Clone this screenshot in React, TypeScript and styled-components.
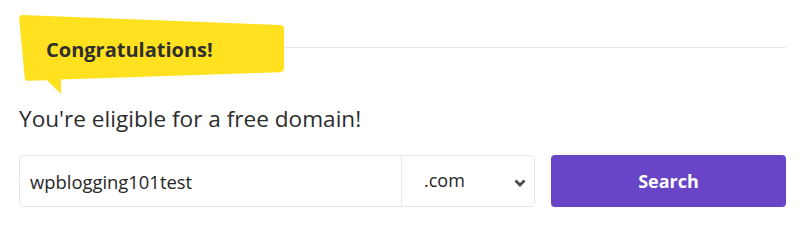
import React from 'react';
import styled, { createGlobalStyle } from 'styled-components';

const GlobalStyle = createGlobalStyle`
  body {
    margin: 0;
    background: #ffffff;
    font-family: "Open Sans", "Noto Sans", sans-serif;
  }
`;

const App = () => {
  return (
    <Page>
      <GlobalStyle />
      <HeaderRow>
        <Badge>
          <BadgeShape viewBox="0 0 265 80" preserveAspectRatio="none">
            <path
              d="M3 0 L261 10 Q265 10.2 265 14 L265 53 Q265 57 261 57.2 L42 64.6 L42 79 L28 65.2 L9 65.8 Q6 65.9 5.7 62.5 L0.2 4 Q0 0 3 0 Z"
              fill="#ffe11f"
            />
          </BadgeShape>
          <BadgeText>Congratulations!</BadgeText>
        </Badge>
        <Divider />
      </HeaderRow>
      <Heading>You're eligible for a free domain!</Heading>
      <SearchRow>
        <Field>
          <DomainInput defaultValue="wpblogging101test" />
          <TldSelect>
            <TldText>.com</TldText>
            <Chevron viewBox="0 0 12 8">
              <path d="M1.5 1.5 L6 6 L10.5 1.5" fill="none" stroke="#4a4a4a" strokeWidth="2.8" />
            </Chevron>
          </TldSelect>
        </Field>
        <SearchButton>Search</SearchButton>
      </SearchRow>
    </Page>
  );
};

export default App;

const Page = styled.div`
  width: 800px;
  height: 225px;
  box-sizing: border-box;
  padding: 15px 14px 0 19px;
  overflow: hidden;
`;

const HeaderRow = styled.div`
  display: flex;
  align-items: flex-start;
`;

const Badge = styled.div`
  position: relative;
  width: 265px;
  height: 80px;
  flex-shrink: 0;
`;

const BadgeShape = styled.svg`
  position: absolute;
  inset: 0;
  width: 100%;
  height: 100%;
`;

const BadgeText = styled.div`
  position: relative;
  padding: 21px 0 0 27px;
  font-size: 20px;
  line-height: 28px;
  font-weight: 700;
  color: #2f2f2f;
`;

const Divider = styled.div`
  flex: 1;
  height: 1px;
  margin-top: 32px;
  background: #e9e9e9;
`;

const Heading = styled.h1`
  margin: 9px 0 0 0;
  font-size: 22.6px;
  line-height: 30px;
  font-weight: 500;
  color: #2d2d2d;
`;

const SearchRow = styled.div`
  display: flex;
  gap: 16px;
  margin-top: 21px;
`;

const Field = styled.div`
  display: flex;
  width: 516px;
  height: 52px;
  box-sizing: border-box;
  border: 1px solid #e6e6e6;
  border-radius: 5px;
  overflow: hidden;
`;

const DomainInput = styled.input`
  flex: 1;
  min-width: 0;
  border: none;
  outline: none;
  padding: 0 0 0 10px;
  font-family: "Open Sans", "Noto Sans", sans-serif;
  font-size: 18.4px;
  color: #262626;
  background: transparent;
`;

const TldSelect = styled.div`
  width: 133px;
  display: flex;
  align-items: center;
  justify-content: space-between;
  box-sizing: border-box;
  padding: 0 8px 0 22px;
  border-left: 1px solid #e8e8e8;
`;

const TldText = styled.span`
  font-size: 18px;
  color: #262626;
  margin-top: -2px;
`;

const Chevron = styled.svg`
  width: 12px;
  height: 8px;
  margin-top: 4px;
`;

const SearchButton = styled.button`
  width: 235px;
  height: 52px;
  border: none;
  border-radius: 4px;
  background: #6745c6;
  color: #ffffff;
  font-family: "Open Sans", "Noto Sans", sans-serif;
  font-size: 18px;
  font-weight: 700;
  cursor: pointer;
`;
